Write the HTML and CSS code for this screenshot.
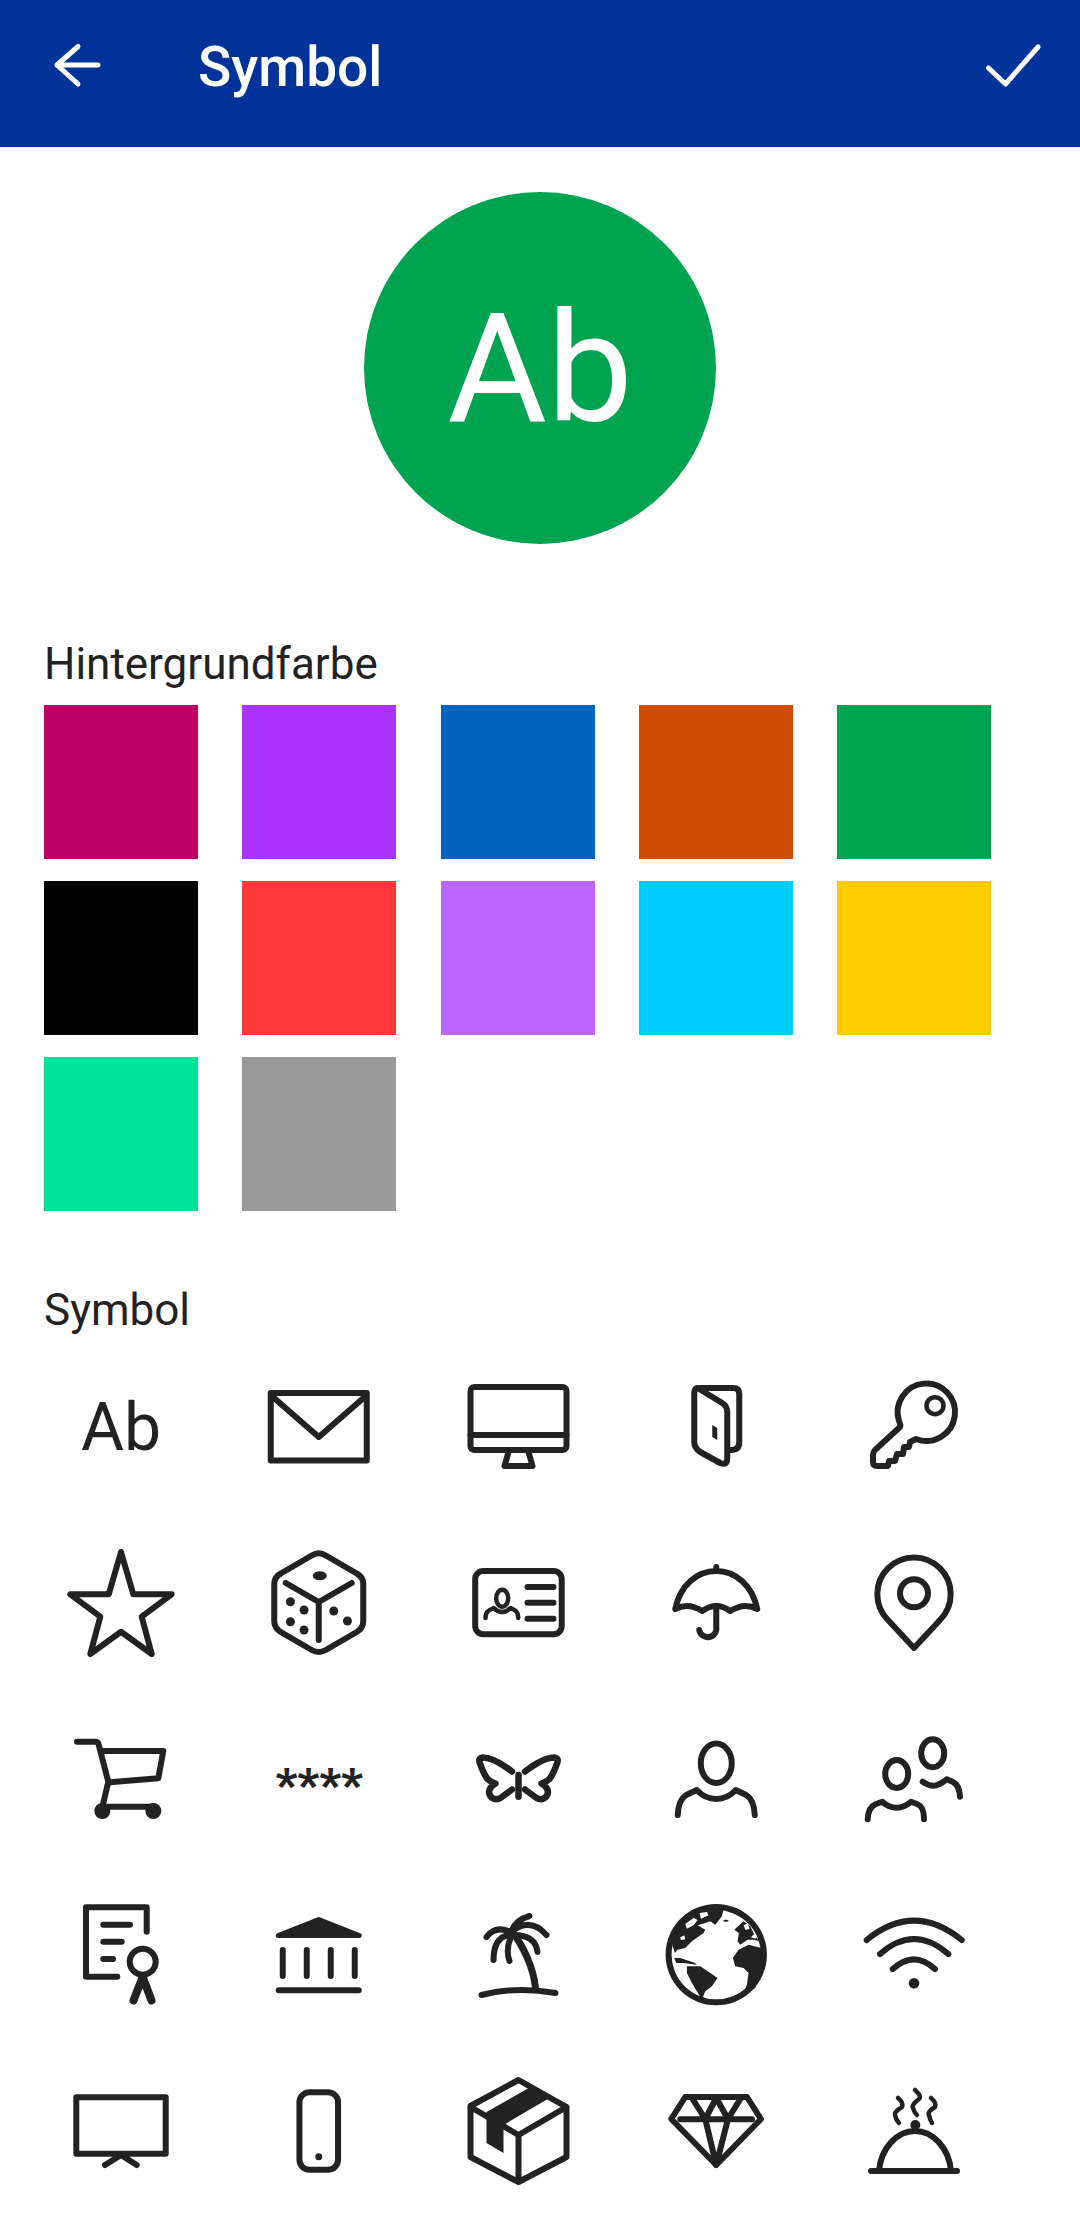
FILE: index.html
```html
<!DOCTYPE html>
<html lang="de">
<head>
    <meta charset="UTF-8">
    <meta name="viewport" content="width=device-width, initial-scale=1.0">
    <title>Symbol</title>
    <link rel="stylesheet" href="styles.css">
</head>
<body>
    <header class="appbar">
        <svg class="appbar-back" viewBox="50 39 56 56"><path d="M98 65H57M78 46.500L57 65L78 84"/></svg>
        <h1 class="appbar-title">Symbol</h1>
        <svg class="appbar-ok" viewBox="982 39 64 56"><path d="M988.500 68L1005.500 84L1038 47"/></svg>
    </header>

    <div class="avatar">Ab</div>

    <h2 class="label label-colors">Hintergrundfarbe</h2>
    <div class="swatches">
        <div class="swatch swatch-magenta"></div>
        <div class="swatch swatch-violet"></div>
        <div class="swatch swatch-blue"></div>
        <div class="swatch swatch-orange"></div>
        <div class="swatch swatch-green"></div>
        <div class="swatch swatch-black"></div>
        <div class="swatch swatch-red"></div>
        <div class="swatch swatch-lilac"></div>
        <div class="swatch swatch-cyan"></div>
        <div class="swatch swatch-yellow"></div>
        <div class="swatch swatch-mint"></div>
        <div class="swatch swatch-grey"></div>
    </div>

    <h2 class="label label-symbols">Symbol</h2>
    <div class="symbols">
        <!-- row 1 -->
        <div class="symbol symbol-text">Ab</div>
        <svg class="symbol" viewBox="242.250 1350 154 154">
            <rect x="271" y="1393" width="96" height="67.500"/>
            <path d="M272 1396L319 1437L366 1396"/>
        </svg>
        <svg class="symbol" viewBox="440.500 1350 154 154">
            <rect x="470" y="1387" width="96" height="63" rx="4"/>
            <path d="M470 1435H566M508 1452L504 1466H532L528 1452"/>
        </svg>
        <svg class="symbol" viewBox="638.750 1350 154 154">
            <path d="M700 1388H733Q739 1388 739 1394V1442Q739 1450 731 1450H729"/>
            <path d="M699 1389L722 1403Q727 1406 727 1412V1458Q727 1466 720 1463L700 1452Q694 1448 694 1442V1394Q694 1386 699 1389Z"/>
            <path class="solid" d="M712 1425L717 1428V1440L712 1437Z"/>
        </svg>
        <svg class="symbol" viewBox="837 1350 154 154">
            <path d="M899 1421A28.700 28.700 0 1 1 916 1439L910 1442L909 1447L904 1447L903 1454L897 1454L895 1461L889 1461L888 1466H877Q873 1466 873 1462V1455Q873 1452 875 1450L900 1427Q901 1425 899 1421Z"/>
            <circle class="thin" cx="935" cy="1405.700" r="8.500"/>
        </svg>

        <!-- row 2 -->
        <svg class="symbol" viewBox="44 1526 154 154">
            <path d="M121 1552L133.300 1594.300H171.700L141.700 1616.700L151.700 1654L121 1631.700L90.300 1654L100.300 1616.700L70.300 1594.300H108.700Z"/>
        </svg>
        <svg class="symbol" viewBox="242.250 1526 154 154">
            <path d="M312 1555.500Q319 1551 326 1555.500L357 1573.500Q363.500 1577 363.500 1584V1621Q363.500 1628 357 1632L326 1650Q319 1654 312 1650L281 1632Q274.500 1628 274.500 1621V1584Q274.500 1577 281 1573.500Z"/>
            <path d="M286 1583L319 1602L352 1583M319 1602V1640"/>
            <g class="solid">
                <ellipse cx="320" cy="1575.700" rx="7" ry="4.500"/>
                <circle cx="290.700" cy="1601.700" r="4.500"/>
                <circle cx="304.300" cy="1610" r="4.500"/>
                <circle cx="290.700" cy="1621.700" r="4.500"/>
                <circle cx="304.300" cy="1630" r="4.500"/>
                <circle cx="334" cy="1611" r="4.500"/>
                <circle cx="347.700" cy="1621" r="4.500"/>
            </g>
        </svg>
        <svg class="symbol" viewBox="440.500 1526 154 154">
            <rect x="474.700" y="1571" width="86.500" height="63.300" rx="8"/>
            <ellipse class="thin" cx="501.700" cy="1598.300" rx="6" ry="8.500"/>
            <path class="thin" d="M485 1618C485 1612 488 1610 493.300 1608C496 1611 499 1612 501.700 1612C504 1612 507 1611 510 1608C515 1610 518 1612 517.700 1618"/>
            <path d="M527 1587H553M527 1602.700H553M527 1618.700H553"/>
        </svg>
        <svg class="symbol" viewBox="638.750 1526 154 154">
            <path d="M675 1609C680 1585 697 1571 716 1571C735 1571 752 1585 757 1609Q744 1602 730 1611Q716 1601 702 1611Q688 1602 675 1609Z"/>
            <path d="M716 1606V1627A8.500 8.500 0 0 1 699 1630"/>
            <circle class="solid" cx="716" cy="1567" r="3"/>
        </svg>
        <svg class="symbol" viewBox="837 1526 154 154">
            <path d="M914 1648L888 1620A36.700 36.700 0 1 1 940 1620Z"/>
            <circle cx="914" cy="1593.300" r="14"/>
        </svg>

        <!-- row 3 -->
        <svg class="symbol" viewBox="44 1702 154 154">
            <path d="M77 1741.700H95Q98 1741.700 98.500 1744L108.300 1781.700L101.700 1810"/>
            <path d="M101.700 1751H163.300L158.300 1778.300L110 1782.300"/>
            <path d="M101.700 1806.700H153.300"/>
            <circle class="solid" cx="102.300" cy="1811" r="8"/>
            <circle class="solid" cx="153.300" cy="1811" r="8"/>
        </svg>
        <div class="symbol symbol-stars">****</div>
        <svg class="symbol" viewBox="440.500 1702 154 154">
            <path class="wing" d="M511.500 1771.500C503 1765 491 1757.500 482 1757.500Q478 1758 479 1762C481 1768 484 1775 487 1779Q490 1782 495 1783.500Q489 1787 488.500 1792C489 1798 495 1801 500 1798L511.500 1789.500"/>
            <path class="wing" d="M524.500 1771.500C533 1765 545 1757.500 554 1757.500Q558 1758 557 1762C555 1768 552 1775 549 1779Q546 1782 541 1783.500Q547 1787 547.500 1792C547 1798 541 1801 536 1798L524.500 1789.500"/>
            <path class="wing" d="M518 1775V1796.700"/>
        </svg>
        <svg class="symbol" viewBox="638.750 1702 154 154">
            <ellipse cx="716" cy="1763.300" rx="15.500" ry="19.700"/>
            <path d="M677.500 1815C678 1803 681 1798 686 1795L696.500 1790C703 1797 709 1799 716 1799C723 1799 729 1797 735.500 1790L746 1795C751 1798 754 1803 754.500 1815"/>
        </svg>
        <svg class="symbol" viewBox="837 1702 154 154">
            <ellipse cx="896.700" cy="1774" rx="11.500" ry="14"/>
            <ellipse cx="932.700" cy="1753.300" rx="11.500" ry="14"/>
            <path d="M867.700 1819.300C868 1810 871 1806 876 1804L882.300 1801.700C887 1806 892 1807.700 896.700 1807.700C901 1807.700 906 1806 911 1801.700L917 1804C922 1806 924 1810 924 1819.300"/>
            <path d="M922.700 1781.700C927 1784.500 930 1785.700 933.300 1785.700C938 1785.700 942 1783 946.700 1779.300L953 1782C957 1784 959.500 1788 960 1796.700"/>
        </svg>

        <!-- row 4 -->
        <svg class="symbol" viewBox="44 1878 154 154">
            <path d="M146.700 1931.700V1907.300H86V1976.700H117.300"/>
            <path d="M103.300 1924.700H130M103.300 1941.700H121.700M103.300 1959H113"/>
            <circle cx="142.700" cy="1961.700" r="13"/>
            <path class="ribbon" d="M142.700 1977L133.500 2000.500M142.700 1977L151.500 2000.500"/>
        </svg>
        <svg class="symbol" viewBox="242.250 1878 154 154">
            <path class="roof" d="M319 1919.500L359.500 1935.500H278.500Z"/>
            <path d="M283 1950V1976M307 1950V1976M331 1950V1976M355 1950V1976"/>
            <path d="M279 1990.300H359"/>
        </svg>
        <svg class="symbol" viewBox="440.500 1878 154 154">
            <path d="M481 1995Q515 1986 555 1993"/>
            <path class="trunk" d="M511 1931C523 1946 533 1968 535 1988"/>
            <path d="M511 1931Q515 1920 529 1916M512 1931Q530 1917 546 1935M513 1935Q535 1935 537 1952M510 1932Q495 1925 486 1937M508 1935Q493 1938 493 1960M510 1938Q505 1950 509 1961"/>
        </svg>
        <svg class="symbol" viewBox="638.750 1878 154 154">
            <g class="globe" transform="translate(660 1898) scale(.3333)">
                <circle class="globe-ring" cx="168" cy="170" r="152"/>
                <circle class="globe-sea" cx="168" cy="170" r="134"/>
                <path d="M36 140L44 165L52 155L75 150L95 130L130 105L135 95L112 82L135 75L150 70L165 80L185 55L190 34L168 24L100 35L50 85Z"/>
                <path d="M222 95L250 70L270 85L285 115L298 130L280 125L262 125L240 140L232 130L236 105Z"/>
                <path d="M80 205L120 205L150 225L172 240L155 265L135 280L125 305L110 280L95 255L80 225Z"/>
                <path d="M304 150L265 140L235 155L218 180L225 205L250 210L265 225L260 260L245 295L285 270L310 200Z"/>
                <path d="M42 180L60 180L105 195L108 200L70 195L48 195Z"/>
                <ellipse cx="197" cy="68" rx="8" ry="3"/>
                <path class="globe-sea" d="M60 118L72 112L75 124L62 126ZM75 78L100 60L112 66L100 82L80 92ZM118 45L140 42L145 52L122 62ZM250 82L262 76L268 92L256 96ZM272 118L284 106L288 122Z"/>
            </g>
        </svg>
        <svg class="symbol" viewBox="837 1878 154 154">
            <path d="M866.700 1940Q914 1901.400 961.700 1940M880 1954Q914 1924 948.300 1954M892.700 1969Q914 1949.700 935 1969"/>
            <circle class="solid" cx="914" cy="1983.300" r="5.300"/>
        </svg>

        <!-- row 5 -->
        <svg class="symbol" viewBox="44 2054 154 154">
            <rect x="76.300" y="2097.300" width="89.400" height="56.400"/>
            <path d="M105 2165L121 2155L136.700 2165"/>
        </svg>
        <svg class="symbol" viewBox="242.250 2054 154 154">
            <rect x="299.700" y="2092.300" width="38.600" height="77.400" rx="10"/>
            <circle class="solid" cx="319" cy="2156.700" r="3.500"/>
        </svg>
        <svg class="symbol" viewBox="440.500 2054 154 154">
            <path class="solid" d="M530 2087L486 2112V2143L503 2153V2125L549 2098Z"/>
            <path d="M518 2080L566 2107V2157L518 2182L470 2157V2106ZM470 2107L518 2135L566 2107M518 2135V2182"/>
        </svg>
        <svg class="symbol" viewBox="638.750 2054 154 154">
            <path d="M685 2097H746.700L760.700 2119L716 2165L671 2119Z"/>
            <path d="M680 2119.300H751.700M691.700 2098L705 2119L716 2098L727.700 2119L740.700 2098M705 2119L716 2165L727.700 2119"/>
        </svg>
        <svg class="symbol" viewBox="837 2054 154 154">
            <path d="M871 2171H957"/>
            <path d="M879 2171C881 2148 897 2131 915 2131C933 2131 949 2148 951 2171"/>
            <circle class="solid" cx="915.300" cy="2125" r="5"/>
            <path class="thin" d="M915 2090Q922 2096 919 2099Q911 2105 913 2108Q914 2112 917 2115M898 2098Q904 2103 902 2107Q894 2112 895 2115Q896 2120 899 2123M931 2098Q937 2103 935 2107Q927 2112 929 2115Q930 2120 932 2123"/>
        </svg>
    </div>
</body>
</html>
```

FILE: styles.css
```css
* {
    box-sizing: border-box;
}
body {
    font-family: "Roboto", sans-serif;
    background-color: #ffffff;
    color: #222222;
    width: 1080px;
    margin: 0;
    padding: 0;
}
.appbar {
    display: flex;
    align-items: center;
    height: 147px;
    padding: 0 34px 13px 50px;
    background-color: #003399;
}
.appbar svg {
    height: 56px;
    fill: none;
    stroke: #ffffff;
    stroke-width: 5;
    stroke-linecap: round;
    stroke-linejoin: round;
}
.appbar-back {
    width: 56px;
}
.appbar-ok {
    width: 64px;
}
.appbar-title {
    flex: 1;
    margin: 0 0 0 92px;
    color: #ffffff;
    font-size: 55px;
    font-weight: 500;
}
.avatar {
    display: flex;
    align-items: center;
    justify-content: center;
    width: 352px;
    height: 352px;
    margin: 45px auto 0;
    border-radius: 50%;
    background-color: #00a350;
    color: #ffffff;
    font-size: 153px;
}
.label {
    margin: 0;
    padding-left: 44px;
    font-size: 44px;
    font-weight: 400;
    line-height: 52px;
}
.label-colors {
    margin-top: 94px;
    margin-bottom: 15px;
}
.label-symbols {
    margin-top: 73px;
    margin-bottom: 14px;
}
.swatches,
.symbols {
    display: grid;
    grid-template-columns: repeat(5, 154px);
    column-gap: 44.25px;
    row-gap: 22px;
    padding-left: 44px;
}
.swatch {
    height: 154px;
}
.swatch-magenta { background-color: #bb0066; }
.swatch-violet { background-color: #aa33ff; }
.swatch-blue { background-color: #0064bd; }
.swatch-orange { background-color: #cc4c00; }
.swatch-green { background-color: #00a350; }
.swatch-black { background-color: #000000; }
.swatch-red { background-color: #ff3939; }
.swatch-lilac { background-color: #bb66ff; }
.swatch-cyan { background-color: #00ccff; }
.swatch-yellow { background-color: #ffcc00; }
.swatch-mint { background-color: #00e096; }
.swatch-grey { background-color: #999999; }

.symbol {
    width: 154px;
    height: 154px;
    fill: none;
    stroke: #222222;
    stroke-width: 6;
    stroke-linecap: round;
    stroke-linejoin: round;
}
.symbol-text,
.symbol-stars {
    display: flex;
    align-items: center;
    justify-content: center;
}
.symbol-text {
    font-size: 66px;
}
.symbol-stars {
    padding-top: 11px;
    font-size: 47px;
    font-weight: 900;
}
.symbol .solid {
    fill: #222222;
    stroke: none;
}
.symbol .thin {
    stroke-width: 4.5;
}
.symbol .wing {
    stroke-width: 6.5;
}
.symbol .ribbon {
    stroke-width: 8;
}
.symbol .roof {
    fill: #222222;
    stroke-width: 5;
}
.symbol .trunk {
    stroke-width: 7;
}
.globe {
    fill: #222222;
    stroke: none;
}
.globe .globe-sea {
    fill: #ffffff;
}
```
